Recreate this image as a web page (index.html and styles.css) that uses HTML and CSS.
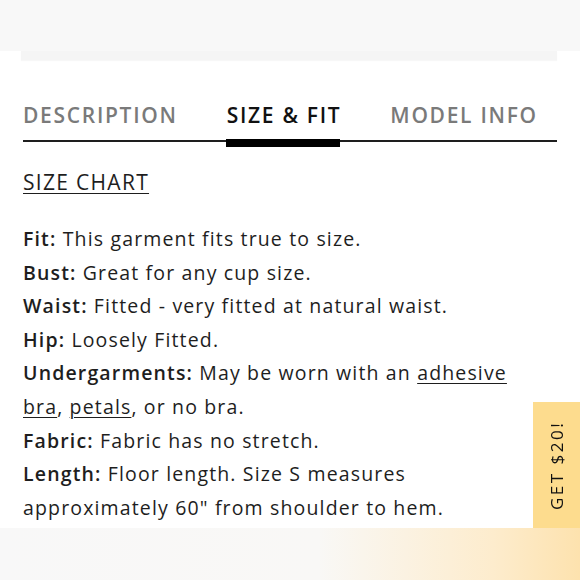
FILE: index.html
```html
<!DOCTYPE html>
<html>
<head>
<meta charset="utf-8">
<link rel="stylesheet" href="styles.css">
</head>
<body>
<div class="top-band"></div>
<div class="card-strip"></div>
<main class="content">
  <nav class="tabs">
    <div class="tab">DESCRIPTION</div>
    <div class="tab active">SIZE &amp; FIT</div>
    <div class="tab">MODEL INFO</div>
  </nav>
  <a class="size-chart" href="#">SIZE CHART</a>
  <div class="details">
    <p><b>Fit:</b> This garment fits true to size.</p>
    <p><b>Bust:</b> Great for any cup size.</p>
    <p><b>Waist:</b> Fitted - very fitted at natural waist.</p>
    <p><b>Hip:</b> Loosely Fitted.</p>
    <p><b>Undergarments:</b> May be worn with an <a href="#">adhesive<br>bra</a>, <a href="#">petals</a>, or no bra.</p>
    <p><b>Fabric:</b> Fabric has no stretch.</p>
    <p><b>Length:</b> Floor length. Size S measures<br>approximately 60" from shoulder to hem.</p>
  </div>
</main>
<div class="promo">GET $20!</div>
<div class="bottom-band"></div>
</body>
</html>
```
FILE: styles.css
```css
html, body {
  margin: 0;
  padding: 0;
  background: #fff;
  overflow: hidden;
  height: 580px;
}
body {
  font-family: "Open Sans", "Liberation Sans", sans-serif;
  color: #1e1e1e;
}
.top-band {
  height: 51px;
  background: #f8f8f8;
}
.card-strip {
  margin: 0 23px 0 21px;
  height: 9px;
  background: #f5f5f5;
  box-shadow: 0 1px 1px rgba(0,0,0,0.03);
}
.content {
  padding: 0 23px;
}
.tabs {
  display: flex;
  gap: 49px;
  margin-top: 42px;
  border-bottom: 2px solid #1e1e1e;
  height: 38px;
}
.tab {
  font-size: 21px;
  font-weight: 600;
  letter-spacing: 1.7px;
  color: #7a7a7a;
  line-height: 26px;
  white-space: nowrap;
  position: relative;
}
.tab.active {
  color: #111;
}
.tab.active::after {
  content: "";
  position: absolute;
  left: -1px;
  right: 1px;
  bottom: -7px;
  height: 8px;
  background: #000;
}
.size-chart {
  display: inline-block;
  margin-top: 26px;
  font-size: 21px;
  line-height: 28px;
  color: #1e1e1e;
  letter-spacing: 1.3px;
  text-decoration: underline;
  text-decoration-thickness: 1px;
  text-underline-offset: 3px;
}
.details {
  margin-top: 26px;
  font-size: 19.5px;
  line-height: 33.6px;
  letter-spacing: 1.15px;
  white-space: nowrap;
}
.details p {
  margin: 0;
}
.details b {
  font-weight: 600;
}
.details a {
  color: inherit;
  text-decoration: underline;
  text-decoration-thickness: 1px;
  text-underline-offset: 3px;
}
.promo {
  position: fixed;
  left: 533px;
  top: 402px;
  width: 47px;
  height: 126px;
  background: #fddc8e;
  display: flex;
  align-items: center;
  justify-content: center;
  font-size: 17px;
  letter-spacing: 2.5px;
  color: #111;
  writing-mode: vertical-rl;
  transform: rotate(180deg);
  transform-origin: center;
}
.bottom-band {
  position: fixed;
  left: 0;
  right: 0;
  top: 528px;
  height: 52px;
  background: linear-gradient(90deg, #f8f8f8 0%, #f9f8f6 55%, #fdeccd 85%, #fde2ae 100%);
}
```
